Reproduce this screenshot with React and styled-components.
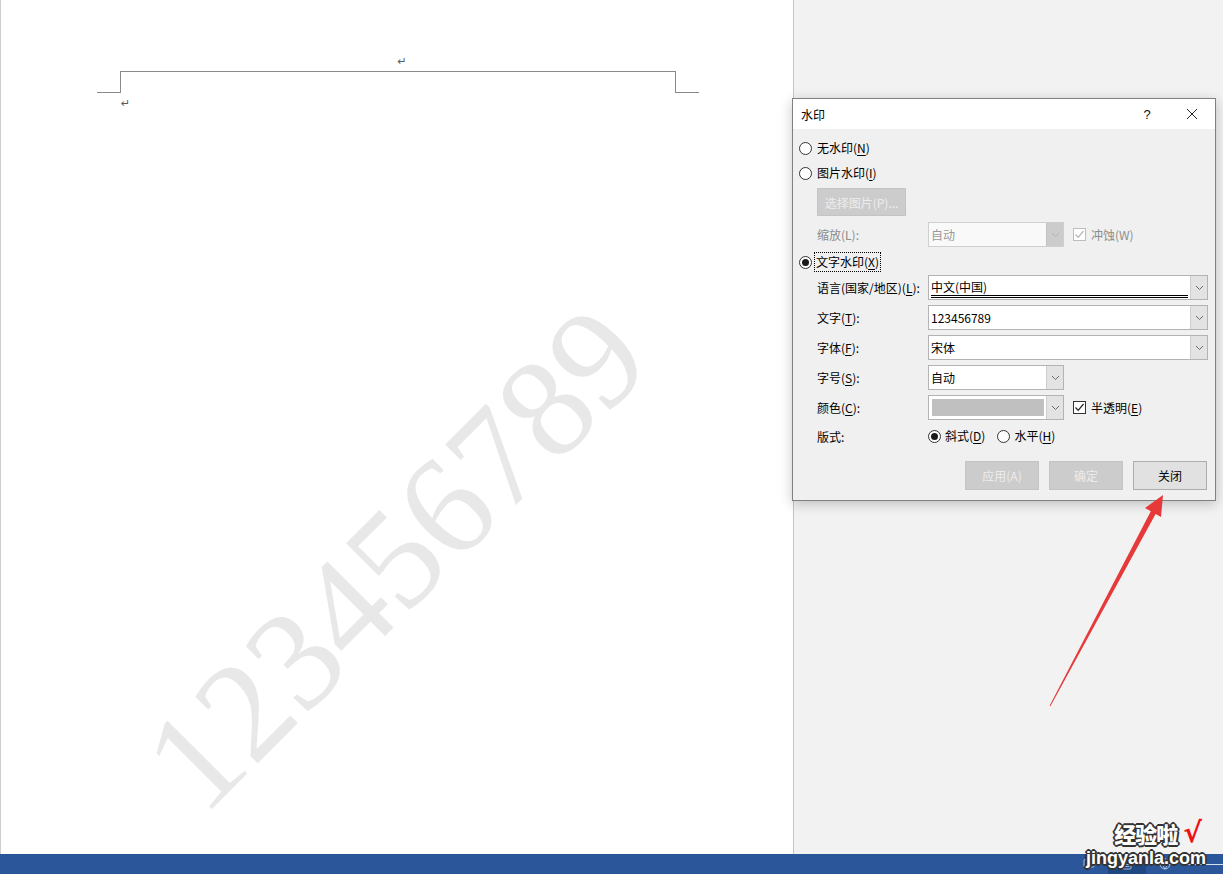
import React from 'react';
import styled, { createGlobalStyle } from 'styled-components';
import { BookOpen, FileText, Globe } from 'lucide-react';

const GlobalStyle = createGlobalStyle`
  html, body {
    margin: 0;
    padding: 0;
    overflow: hidden;
  }
  body {
    font-family: "Noto Sans CJK SC", sans-serif;
    font-size: 12px;
    color: #000;
  }
`;

const Screen = styled.div`
  position: relative;
  width: 1223px;
  height: 874px;
  display: flex;
  flex-direction: column;
  overflow: hidden;
`;

const Workspace = styled.div`
  flex: 1;
  display: flex;
  background: #f2f2f2;
`;

const Page = styled.div`
  position: relative;
  background: #fff;
  border-left: 1px solid #cdcdcd;
  border-right: 1px solid #c4c4c4;
  padding: 52px 94px 0 96px;
  box-sizing: border-box;
  width: 794px;
  overflow: hidden;
`;

const Mark = styled.div`
  height: ${p => p.$h || 19}px;
  font-family: "DejaVu Sans", sans-serif;
  font-size: 11px;
  color: #5a5a5a;
  text-align: ${p => p.$align || 'left'};
  line-height: ${p => p.$lh || '18px'};
  padding-left: ${p => p.$indent || 0}px;
`;

const Bracket = styled.div`
  display: flex;
  height: 22px;
`;

const Stub = styled.div`
  width: 23px;
  border-bottom: 1px solid #8a8a8a;
`;

const BracketMid = styled.div`
  flex: 1;
  border: 1px solid #8a8a8a;
  border-bottom: none;
`;

const Watermark = styled.div`
  position: absolute;
  left: 394px;
  top: 558px;
  transform: translate(-50%, -50%) rotate(-45deg);
  font-family: "Liberation Serif", serif;
  font-size: 142px;
  line-height: 1;
  color: #e8e8e8;
  white-space: nowrap;
`;

const StatusBar = styled.div`
  height: 20px;
  background: #2b579a;
  display: flex;
  align-items: stretch;
  justify-content: flex-end;
`;

const ViewButton = styled.div`
  width: 38px;
  display: flex;
  align-items: center;
  justify-content: center;
  color: #d6dfec;
  background: ${p => (p.$active ? '#1f4780' : 'transparent')};
`;

const ZoomLine = styled.div`
  width: 35px;
  margin-left: 4px;
  display: flex;
  align-items: center;
  &::before {
    content: '';
    display: block;
    width: 100%;
    height: 1px;
    background: #d6dfec;
  }
`;

/* dialog */

const Dialog = styled.div`
  position: absolute;
  left: 792px;
  top: 98px;
  width: 424px;
  height: 403px;
  box-sizing: border-box;
  border: 1px solid #808080;
  background: #f0f0f0;
  box-shadow: 0 3px 12px rgba(0, 0, 0, 0.22);
  display: flex;
  flex-direction: column;
`;

const TitleBar = styled.div`
  height: 30px;
  background: #fff;
  display: flex;
  align-items: center;
  padding-left: 8px;
  font-size: 12px;
`;

const TitleText = styled.div`
  flex: 1;
`;

const TitleButton = styled.div`
  width: ${p => p.$w}px;
  height: 30px;
  display: flex;
  align-items: center;
  justify-content: center;
  font-family: "Liberation Sans", sans-serif;
  font-size: 13px;
  color: #111;
`;

const Body = styled.div`
  flex: 1;
  padding: 9px 8px 0 6px;
  display: flex;
  flex-direction: column;
`;

const Line = styled.div`
  height: ${p => p.$h || 20}px;
  margin-top: ${p => p.$mt || 0}px;
  padding-left: ${p => p.$indent || 0}px;
  display: flex;
  align-items: center;
`;

const Radio = styled.span`
  width: 13px;
  height: 13px;
  box-sizing: border-box;
  border-radius: 50%;
  border: 1px solid #333;
  background: #fff;
  display: inline-flex;
  align-items: center;
  justify-content: center;
  flex: none;
  margin-left: ${p => p.$lead || 0}px;
  margin-right: ${p => p.$gap || 4}px;
  &::after {
    content: '';
    width: 7px;
    height: 7px;
    border-radius: 50%;
    background: ${p => (p.$on ? '#1a1a1a' : 'transparent')};
  }
`;

const Caption = styled.span`
  color: ${p => (p.$off ? '#8c8c8c' : '#000')};
  white-space: nowrap;
  line-height: 16px;
  padding: 1px 1px;
  outline: ${p => (p.$focus ? '1px dotted #000' : 'none')};
  u {
    text-underline-offset: 2px;
  }
`;

const Label = styled.span`
  width: 111px;
  flex: none;
  color: ${p => (p.$off ? '#8c8c8c' : '#000')};
  white-space: nowrap;
  u {
    text-underline-offset: 2px;
  }
`;

const PickButton = styled.div`
  width: 89px;
  height: 28px;
  box-sizing: border-box;
  background: #cccccc;
  border: 1px solid #c4c4c4;
  color: #ececec;
  display: flex;
  align-items: center;
  justify-content: center;
  white-space: nowrap;
`;

const Combo = styled.div`
  width: ${p => p.$w}px;
  height: 25px;
  box-sizing: border-box;
  border: 1px solid ${p => (p.$off ? '#cfcfcf' : '#b3b3b3')};
  background: ${p => (p.$off ? '#f9f9f9' : '#fff')};
  display: flex;
  flex: none;
`;

const ComboValue = styled.div`
  flex: 1;
  min-width: 0;
  padding: 0 2px 0 2px;
  display: flex;
  align-items: center;
  color: ${p => (p.$off ? '#9a9a9a' : '#000')};
  font-size: 12px;
`;

const Selected = styled.div`
  width: 100%;
  height: 21px;
  box-sizing: border-box;
  border-bottom: 3px double #000;
  display: flex;
  align-items: center;
  padding-top: 1px;
`;

const Swatch = styled.div`
  width: 100%;
  height: 17px;
  margin-left: 1px;
  background: #c0c0c0;
`;

const ComboArrow = styled.div`
  width: 17px;
  flex: none;
  box-sizing: border-box;
  border-left: 1px solid ${p => (p.$off ? '#c4c4c4' : '#cfcfcf')};
  background: ${p => (p.$off ? '#cccccc' : '#e3e3e3')};
  display: flex;
  align-items: center;
  justify-content: center;
`;

const Check = styled.span`
  width: 13px;
  height: 13px;
  box-sizing: border-box;
  border: 1px solid ${p => (p.$off ? '#bdbdbd' : '#333')};
  background: #fff;
  display: inline-flex;
  align-items: center;
  justify-content: center;
  margin: 0 4px 0 9px;
  flex: none;
`;

const ButtonRow = styled.div`
  margin-top: 15px;
  height: 29px;
  display: flex;
  justify-content: flex-end;
  gap: 10px;
`;

const DlgButton = styled.div`
  width: 74px;
  height: 29px;
  box-sizing: border-box;
  background: ${p => (p.$off ? '#cccccc' : '#e1e1e1')};
  border: 1px solid ${p => (p.$off ? '#c4c4c4' : '#adadad')};
  color: ${p => (p.$off ? '#ececec' : '#000')};
  display: flex;
  align-items: center;
  justify-content: center;
`;

/* overlays */

const ArrowSvg = styled.svg`
  position: absolute;
  left: 1040px;
  top: 490px;
`;

const SiteLogo = styled.div`
  position: absolute;
  left: 1080px;
  top: 818px;
  width: 140px;
  display: flex;
  flex-direction: column;
  align-items: flex-end;
  pointer-events: none;
`;

const LogoTop = styled.div`
  display: flex;
  align-items: center;
  height: 30px;
  margin-right: 18px;
`;

const LogoCn = styled.span`
  font-family: "Noto Sans CJK SC", sans-serif;
  font-weight: 900;
  font-size: 22px;
  letter-spacing: -1px;
  color: #fff;
  text-shadow: -1px -1px 0 #333, 1px -1px 0 #333, -1px 1px 0 #333, 1px 1px 0 #333,
    0 -2px 0 #333, 0 2px 0 #333, -2px 0 0 #333, 2px 0 0 #333;
`;

const LogoTick = styled.span`
  font-family: "DejaVu Sans", sans-serif;
  font-weight: bold;
  font-size: 28px;
  color: #ee1111;
  margin-left: 6px;
  line-height: 1;
`;

const LogoUrl = styled.span`
  font-family: "Liberation Sans", sans-serif;
  font-weight: bold;
  font-size: 18px;
  line-height: 20px;
  color: #fff;
  margin-right: 14px;
  text-shadow: -1px -1px 0 #333, 1px -1px 0 #333, -1px 1px 0 #333, 1px 1px 0 #333,
    0 -2px 0 #333, 0 2px 0 #333, -2px 0 0 #333, 2px 0 0 #333;
`;

const Chevron = ({ off }) => (
  <svg width="9" height="6" viewBox="0 0 9 6">
    <polyline points="1,1 4.5,4.5 8,1" fill="none" stroke={off ? '#b0b0b0' : '#6b6b6b'} strokeWidth="1" />
  </svg>
);

const Tick = ({ off }) => (
  <svg width="11" height="11" viewBox="0 0 11 11">
    <polyline points="1.5,5.5 4.2,8.3 9.5,2" fill="none" stroke={off ? '#b5b5b5' : '#222'} strokeWidth="1.2" />
  </svg>
);

const CloseGlyph = () => (
  <svg width="12" height="12" viewBox="0 0 12 12">
    <path d="M1 1 L11 11 M11 1 L1 11" stroke="#222" strokeWidth="1" />
  </svg>
);

const RedArrow = () => (
  <ArrowSvg width="130" height="225" viewBox="0 0 130 225">
    <polygon
      points="123,5 121,27 115.6,23.9 10.4,216.3 9.6,215.7 110.8,21.3 105,18"
      fill="#e63a3a"
    />
  </ArrowSvg>
);

const App = () => {
  return (
    <>
      <GlobalStyle />
      <Screen>
        <Workspace>
          <Page>
            <Mark $align="center" $lh="19px" $indent={8}>↵</Mark>
            <Bracket>
              <Stub />
              <BracketMid />
              <Stub />
            </Bracket>
            <Mark $indent={24} $h={24} $lh="22px">↵</Mark>
            <Watermark>123456789</Watermark>
          </Page>
        </Workspace>
        <StatusBar>
          <ViewButton>
            <BookOpen size={12} strokeWidth={1.5} />
          </ViewButton>
          <ViewButton $active>
            <FileText size={12} strokeWidth={1.5} />
          </ViewButton>
          <ViewButton>
            <Globe size={12} strokeWidth={1.5} />
          </ViewButton>
          <ZoomLine />
        </StatusBar>

        <Dialog>
          <TitleBar>
            <TitleText>水印</TitleText>
            <TitleButton $w={44}>?</TitleButton>
            <TitleButton $w={46}>
              <CloseGlyph />
            </TitleButton>
          </TitleBar>
          <Body>
            <Line>
              <Radio />
              <Caption>无水印(<u>N</u>)</Caption>
            </Line>
            <Line $mt={5}>
              <Radio />
              <Caption>图片水印(<u>I</u>)</Caption>
            </Line>
            <Line $mt={5} $h={28} $indent={18}>
              <PickButton>选择图片(P)...</PickButton>
            </Line>
            <Line $mt={6} $h={25} $indent={18}>
              <Label $off>缩放(L):</Label>
              <Combo $w={136} $off>
                <ComboValue $off>自动</ComboValue>
                <ComboArrow $off>
                  <Chevron off />
                </ComboArrow>
              </Combo>
              <Check $off>
                <Tick off />
              </Check>
              <Caption $off>冲蚀(W)</Caption>
            </Line>
            <Line $mt={5}>
              <Radio $on $gap={3} />
              <Caption $focus>文字水印(<u>X</u>)</Caption>
            </Line>
            <Line $mt={3} $h={25} $indent={18}>
              <Label>语言(国家/地区)(<u>L</u>):</Label>
              <Combo $w={280}>
                <ComboValue>
                  <Selected>中文(中国)</Selected>
                </ComboValue>
                <ComboArrow>
                  <Chevron />
                </ComboArrow>
              </Combo>
            </Line>
            <Line $mt={5} $h={25} $indent={18}>
              <Label>文字(<u>T</u>):</Label>
              <Combo $w={280}>
                <ComboValue>123456789</ComboValue>
                <ComboArrow>
                  <Chevron />
                </ComboArrow>
              </Combo>
            </Line>
            <Line $mt={5} $h={25} $indent={18}>
              <Label>字体(<u>F</u>):</Label>
              <Combo $w={280}>
                <ComboValue>宋体</ComboValue>
                <ComboArrow>
                  <Chevron />
                </ComboArrow>
              </Combo>
            </Line>
            <Line $mt={5} $h={25} $indent={18}>
              <Label>字号(<u>S</u>):</Label>
              <Combo $w={136}>
                <ComboValue>自动</ComboValue>
                <ComboArrow>
                  <Chevron />
                </ComboArrow>
              </Combo>
            </Line>
            <Line $mt={5} $h={25} $indent={18}>
              <Label>颜色(<u>C</u>):</Label>
              <Combo $w={136}>
                <ComboValue>
                  <Swatch />
                </ComboValue>
                <ComboArrow>
                  <Chevron />
                </ComboArrow>
              </Combo>
              <Check>
                <Tick />
              </Check>
              <Caption>半透明(<u>E</u>)</Caption>
            </Line>
            <Line $mt={6} $indent={18}>
              <Label>版式:</Label>
              <Radio $on $gap={3} />
              <Caption>斜式(<u>D</u>)</Caption>
              <Radio $gap={3} $lead={11} />
              <Caption>水平(<u>H</u>)</Caption>
            </Line>
            <ButtonRow>
              <DlgButton $off>应用(A)</DlgButton>
              <DlgButton $off>确定</DlgButton>
              <DlgButton>关闭</DlgButton>
            </ButtonRow>
          </Body>
        </Dialog>

        <RedArrow />

        <SiteLogo>
          <LogoTop>
            <LogoCn>经验啦</LogoCn>
            <LogoTick>√</LogoTick>
          </LogoTop>
          <LogoUrl>jingyanla.com</LogoUrl>
        </SiteLogo>
      </Screen>
    </>
  );
};

export default App;
